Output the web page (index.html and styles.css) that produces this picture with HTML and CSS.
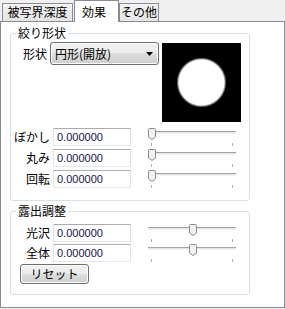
FILE: index.html
```html
<!DOCTYPE html>
<html>
<head>
	<meta charset="utf-8">
	<title>効果</title>
	<link rel="stylesheet" href="styles.css">
</head>
<body>
	<div class="tabs">
		<div class="tab tab-wide">被写界深度</div>
		<div class="tab tab-active">効果</div>
		<div class="tab tab-small">その他</div>
	</div>
	<div class="panel">
		<fieldset class="group group-shape">
			<legend>絞り形状</legend>
			<div class="shape">
				<div class="shape-pick">
					<span class="lbl lbl-shape">形状</span>
					<div class="combo">
						<span>円形(開放)</span>
						<svg width="7" height="4" viewBox="0 0 7 4"><path d="M0 0H7L3.5 4Z" fill="#000"/></svg>
					</div>
				</div>
				<div class="preview"></div>
			</div>
			<div class="row row-first">
				<span class="lbl">ぼかし</span>
				<input class="num" type="text" value="0.000000">
				<div class="slider">
					<div class="track"></div>
					<span class="tick tick-start"></span>
					<span class="tick tick-end"></span>
					<svg class="thumb" style="left: 0px" width="8" height="12" viewBox="0 0 8 12"><path d="M0.5 1.5Q0.5 0.5 1.5 0.5H6.5Q7.5 0.5 7.5 1.5V9L4 11.5L0.5 9Z" fill="#f1f1f1" stroke="#8c8c8c"/></svg>
				</div>
			</div>
			<div class="row">
				<span class="lbl">丸み</span>
				<input class="num" type="text" value="0.000000">
				<div class="slider">
					<div class="track"></div>
					<span class="tick tick-start"></span>
					<span class="tick tick-end"></span>
					<svg class="thumb" style="left: 0px" width="8" height="12" viewBox="0 0 8 12"><path d="M0.5 1.5Q0.5 0.5 1.5 0.5H6.5Q7.5 0.5 7.5 1.5V9L4 11.5L0.5 9Z" fill="#f1f1f1" stroke="#8c8c8c"/></svg>
				</div>
			</div>
			<div class="row">
				<span class="lbl">回転</span>
				<input class="num" type="text" value="0.000000">
				<div class="slider">
					<div class="track"></div>
					<span class="tick tick-start"></span>
					<span class="tick tick-end"></span>
					<svg class="thumb" style="left: 0px" width="8" height="12" viewBox="0 0 8 12"><path d="M0.5 1.5Q0.5 0.5 1.5 0.5H6.5Q7.5 0.5 7.5 1.5V9L4 11.5L0.5 9Z" fill="#f1f1f1" stroke="#8c8c8c"/></svg>
				</div>
			</div>
		</fieldset>
		<fieldset class="group group-exposure">
			<legend>露出調整</legend>
			<div class="row row-first">
				<span class="lbl">光沢</span>
				<input class="num" type="text" value="0.000000">
				<div class="slider">
					<div class="track"></div>
					<span class="tick tick-start"></span>
					<span class="tick tick-end"></span>
					<svg class="thumb" style="left: 41px" width="8" height="12" viewBox="0 0 8 12"><path d="M0.5 1.5Q0.5 0.5 1.5 0.5H6.5Q7.5 0.5 7.5 1.5V9L4 11.5L0.5 9Z" fill="#f1f1f1" stroke="#8c8c8c"/></svg>
				</div>
			</div>
			<div class="row row-tight">
				<span class="lbl">全体</span>
				<input class="num" type="text" value="0.000000">
				<div class="slider">
					<div class="track"></div>
					<span class="tick tick-start"></span>
					<span class="tick tick-end"></span>
					<svg class="thumb" style="left: 41px" width="8" height="12" viewBox="0 0 8 12"><path d="M0.5 1.5Q0.5 0.5 1.5 0.5H6.5Q7.5 0.5 7.5 1.5V9L4 11.5L0.5 9Z" fill="#f1f1f1" stroke="#8c8c8c"/></svg>
				</div>
			</div>
			<button class="reset" type="button">リセット</button>
		</fieldset>
	</div>
</body>
</html>
```

FILE: styles.css
```css
body{
	margin: 0;
	background: #f0f0f0;
	font: 12px/14px "Noto Sans CJK JP", sans-serif;
	color: #000;
}
.tabs{
	display: flex;
	align-items: flex-end;
	height: 21px;
	padding-left: 2px;
	box-sizing: border-box;
}
.tab{
	height: 18px;
	box-sizing: border-box;
	border: 1px solid #898c95;
	border-bottom: none;
	background: linear-gradient(#f4f4f4, #e4e4e4);
	text-align: center;
	line-height: 16px;
}
.tab-wide{
	width: 71px;
	margin-right: 1px;
}
.tab-active{
	position: relative;
	z-index: 1;
	width: 45px;
	height: 22px;
	margin-bottom: -1px;
	padding-right: 5px;
	background: #fff;
	line-height: 21px;
}
.tab-small{
	width: 40px;
}
.panel{
	height: 287px;
	box-sizing: border-box;
	border: 1px solid #898c95;
	background: #fff;
	padding: 4px 0 0 9px;
}
.group{
	width: 240px;
	box-sizing: border-box;
	margin: 0;
	padding: 0;
	border: 1px solid #d5dfe5;
	border-radius: 3px;
}
.group legend{
	margin-left: 5px;
	padding: 0 2px;
	line-height: 14px;
}
.group-shape{
	height: 175px;
}
.group-exposure{
	height: 91px;
	margin-top: 3px;
}
.shape{
	display: flex;
	height: 82px;
}
.shape-pick{
	display: flex;
	align-items: center;
	gap: 3px;
	height: 23px;
	margin-top: 2px;
}
.lbl{
	width: 39px;
	margin-right: 3px;
	text-align: right;
	white-space: nowrap;
}
.lbl-shape{
	width: 36px;
	margin-right: 0;
}
.combo{
	display: flex;
	align-items: center;
	justify-content: space-between;
	width: 109px;
	height: 23px;
	box-sizing: border-box;
	padding: 0 5px 0 4px;
	border: 1px solid #707070;
	border-radius: 3px;
	background: linear-gradient(#f2f2f2, #ebebeb 50%, #dddddd 50%, #cfcfcf);
	box-shadow: inset 0 0 0 1px #fbfbfb;
}
.preview{
	width: 79px;
	height: 79px;
	margin: 3px 0 0 3px;
	background: radial-gradient(circle closest-side, #fff 22.5px, #000 25px);
}
.row{
	display: flex;
	align-items: center;
	height: 18px;
	margin-top: 3px;
}
.row-first{
	margin-top: 6px;
}
.row-tight{
	margin-top: 2px;
}
.num{
	width: 78px;
	height: 18px;
	box-sizing: border-box;
	margin: 0;
	padding: 0 0 0 3px;
	border: 1px solid;
	border-color: #abadb3 #dbdfe6 #e3e9ef #e2e3ea;
	font: 11px "Liberation Sans", sans-serif;
	color: #14144e;
	outline: none;
}
.slider{
	position: relative;
	align-self: flex-start;
	width: 88px;
	height: 18px;
	margin-left: 17px;
}
.track{
	height: 3px;
	box-sizing: border-box;
	margin-top: 3px;
	border-top: 1px solid #a4a4a4;
	border-bottom: 1px solid #f2f4f4;
	background: #dfe4e5;
}
.tick{
	position: absolute;
	top: 15px;
	width: 1px;
	height: 3px;
	background: #b0b0b0;
}
.tick-start{
	left: 3px;
}
.tick-end{
	left: 84px;
}
.thumb{
	position: absolute;
	top: 0;
}
.reset{
	display: block;
	width: 69px;
	height: 20px;
	margin: 2px 0 0 9px;
	padding: 0;
	border: 1px solid #707070;
	border-radius: 3px;
	background: linear-gradient(#f2f2f2, #ebebeb 50%, #dddddd 50%, #cfcfcf);
	box-shadow: inset 0 0 0 1px #fbfbfb;
	font: 12px/16px "Noto Sans CJK JP", sans-serif;
	color: #000;
}
```
